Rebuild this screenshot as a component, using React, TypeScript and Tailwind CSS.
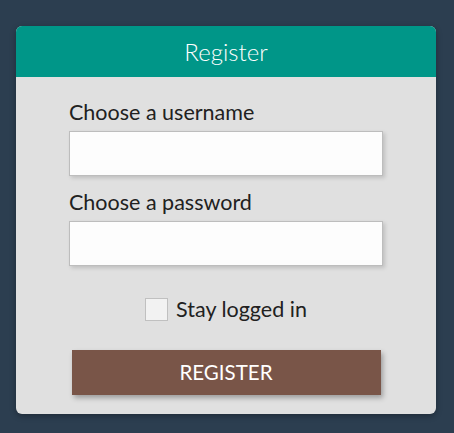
export default function App() {
  return (
    <div className="w-[454px] h-[433px] bg-[#2c3e50] pt-[26px] pl-[16px]" style={{ fontFamily: "Lato, 'Open Sans', sans-serif" }}>
      <div className="w-[420px] h-[388px] bg-[#e0e0e0] rounded-[6px] overflow-hidden shadow-[0_2px_6px_rgba(0,0,0,0.3)]">
        <div className="h-[51px] bg-[#009688] flex items-center justify-center text-white text-[24px] font-light">
          Register
        </div>
        <div className="px-[53px]">
          <div className="pt-[22px] text-[21.5px] leading-[26px] text-[#212121]">Choose a username</div>
          <div className="mt-[6px] h-[45px] bg-[#fdfdfd] border border-[#bdbdbd] shadow-[2px_2px_4px_rgba(0,0,0,0.15)]"></div>
          <div className="mt-[13px] text-[21.5px] leading-[26px] text-[#212121]">Choose a password</div>
          <div className="mt-[6px] h-[45px] bg-[#fdfdfd] border border-[#bdbdbd] shadow-[2px_2px_4px_rgba(0,0,0,0.15)]"></div>
          <div className="mt-[30px] flex items-center justify-center gap-[8px]">
            <div className="w-[23px] h-[23px] bg-[#f2f2f2] border border-[#c0c0c0]"></div>
            <span className="text-[21.5px] leading-[26px] text-[#212121]">Stay logged in</span>
          </div>
          <div className="mt-[28px] mx-auto w-[309px] h-[45px] bg-[#795548] text-white text-[20.5px] flex items-center justify-center shadow-[2px_3px_5px_rgba(0,0,0,0.3)]">
            REGISTER
          </div>
        </div>
      </div>
    </div>
  );
}
